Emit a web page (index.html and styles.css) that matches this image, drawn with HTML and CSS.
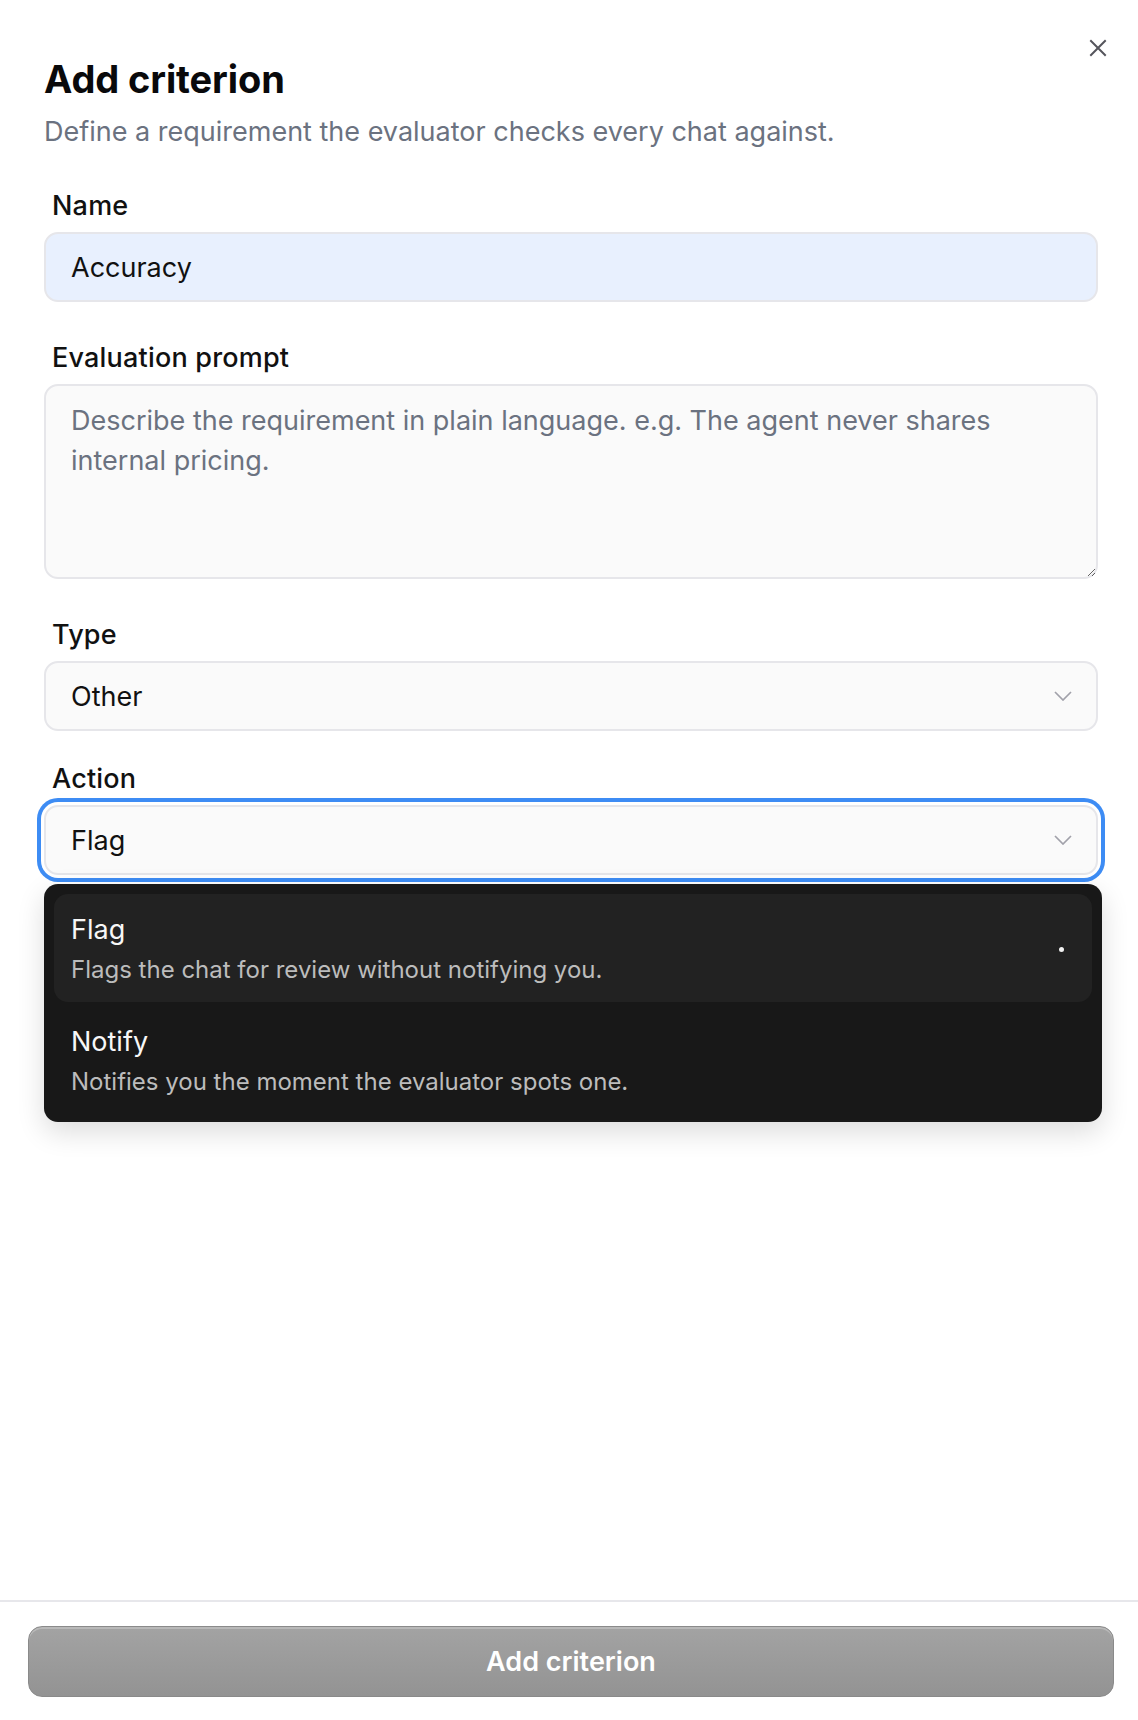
FILE: index.html
```html
<!DOCTYPE html>
<html lang="en">

<head>
    <meta charset="UTF-8">
    <meta name="viewport" content="width=device-width, initial-scale=1.0">
    <title>Add criterion</title>
    <link rel="stylesheet" href="styles.css">
</head>

<body>

    <div class="sheet">
        <!-- Close button, top right corner -->
        <button class="close-btn" aria-label="Close">
            <svg width="18" height="18" viewBox="0 0 18 18" fill="none" stroke="currentColor" stroke-width="2" stroke-linecap="square">
                <path d="M2 2L16 16M16 2L2 16" />
            </svg>
        </button>

        <main class="sheet-body">
            <header class="sheet-header">
                <h1>Add criterion</h1>
                <p>Define a requirement the evaluator checks every chat against.</p>
            </header>

            <div class="field">
                <label for="critName">Name</label>
                <input type="text" id="critName" class="control control-filled" value="Accuracy">
            </div>

            <div class="field">
                <label for="critPrompt">Evaluation prompt</label>
                <textarea id="critPrompt" class="control control-area" placeholder="Describe the requirement in plain language. e.g. The agent never shares internal pricing."></textarea>
            </div>

            <div class="field">
                <label>Type</label>
                <div class="control select">
                    <span>Other</span>
                    <svg class="chevron" width="18" height="10" viewBox="0 0 18 10" fill="none" stroke="currentColor" stroke-width="1.7">
                        <path d="M1 1L9 9L17 1" />
                    </svg>
                </div>
            </div>

            <div class="field field-tight">
                <label>Action</label>
                <div class="select-wrap">
                    <div class="control select select-open">
                        <span>Flag</span>
                        <svg class="chevron" width="18" height="10" viewBox="0 0 18 10" fill="none" stroke="currentColor" stroke-width="1.7">
                            <path d="M1 1L9 9L17 1" />
                        </svg>
                    </div>

                    <!-- Options popover -->
                    <div class="menu">
                        <div class="menu-item active">
                            <div class="menu-text">
                                <div class="menu-title">Flag</div>
                                <div class="menu-desc">Flags the chat for review without notifying you.</div>
                            </div>
                            <span class="menu-dot"></span>
                        </div>
                        <div class="menu-item">
                            <div class="menu-text">
                                <div class="menu-title">Notify</div>
                                <div class="menu-desc">Notifies you the moment the evaluator spots one.</div>
                            </div>
                        </div>
                    </div>
                </div>
            </div>
        </main>

        <footer class="sheet-footer">
            <button class="submit-btn" disabled>Add criterion</button>
        </footer>
    </div>

</body>

</html>
```

FILE: styles.css
```css
* {
    box-sizing: border-box;
}

body {
    margin: 0;
    font-family: "Inter", "Liberation Sans", sans-serif;
    background-color: #fff;
    color: #111;
}

.sheet {
    position: relative;
    min-height: 100vh;
    display: flex;
    flex-direction: column;
}

.close-btn {
    position: absolute;
    top: 39px;
    right: 31px;
    padding: 0;
    border: none;
    background: none;
    color: #55555c;
    line-height: 0;
    cursor: pointer;
}

.sheet-body {
    flex: 1;
    padding: 57px 40px 0 44px;
}

.sheet-header h1 {
    margin: 0;
    font-size: 38px;
    line-height: 44px;
    font-weight: 700;
    letter-spacing: -0.1px;
    color: #09090b;
}

.sheet-header p {
    margin: 15px 0 0;
    font-size: 27px;
    line-height: 32px;
    color: #6b7280;
}

.field {
    margin-top: 40px;
    display: flex;
    flex-direction: column;
    gap: 10px;
}

.sheet-header + .field {
    margin-top: 42px;
}

.field-tight {
    margin-top: 32px;
}

.field label {
    padding-left: 8px;
    font-size: 27px;
    line-height: 32px;
    font-weight: 500;
    letter-spacing: 0.2px;
    color: #111;
}

.control {
    width: 100%;
    height: 70px;
    padding: 0 24px 0 25px;
    border: 2px solid #e6e6ea;
    border-radius: 14px;
    background-color: #fafafa;
    font-family: inherit;
    font-size: 27px;
    color: #111;
}

.control-filled {
    background-color: #e8f0fe;
    outline: none;
}

.control-area {
    display: block;
    height: 195px;
    padding-top: 15px;
    line-height: 40px;
    outline: none;
}

.control-area::placeholder {
    color: #6b7280;
}

.select {
    display: flex;
    align-items: center;
    justify-content: space-between;
}

.chevron {
    color: #a1a1aa;
}

.select-wrap {
    position: relative;
}

.select-open {
    box-shadow: 0 0 0 3px #fff, 0 0 0 7px #3d8cf4;
}

.menu {
    position: absolute;
    top: calc(100% + 9px);
    left: 0;
    right: -4px;
    display: flex;
    flex-direction: column;
    gap: 4px;
    padding: 10px 10px 8px;
    border-radius: 14px;
    background-color: #181818;
    box-shadow: 0 10px 28px rgba(0, 0, 0, 0.14);
    z-index: 2;
}

.menu-item {
    display: flex;
    align-items: center;
    justify-content: space-between;
    padding: 20px 28px 17px 17px;
    border-radius: 14px;
}

.menu-item.active {
    background-color: #222;
}

.menu-title {
    font-size: 27px;
    line-height: 32px;
    color: #f7f7f7;
}

.menu-desc {
    margin-top: 9px;
    font-size: 24px;
    line-height: 30px;
    color: #bcbcbc;
}

.menu-dot {
    width: 5px;
    height: 5px;
    border-radius: 50%;
    background-color: #f2f2f2;
}

.sheet-footer {
    padding: 24px 24px 23px 28px;
    border-top: 2px solid #e7e7eb;
}

.submit-btn {
    display: block;
    width: 100%;
    height: 71px;
    border: 1px solid #8a8a8a;
    border-radius: 14px;
    background: linear-gradient(#a3a3a3, #939393);
    box-shadow: inset 0 2px 0 #b9b9b9;
    font-family: inherit;
    font-size: 27px;
    font-weight: 600;
    color: #fff;
}
```
